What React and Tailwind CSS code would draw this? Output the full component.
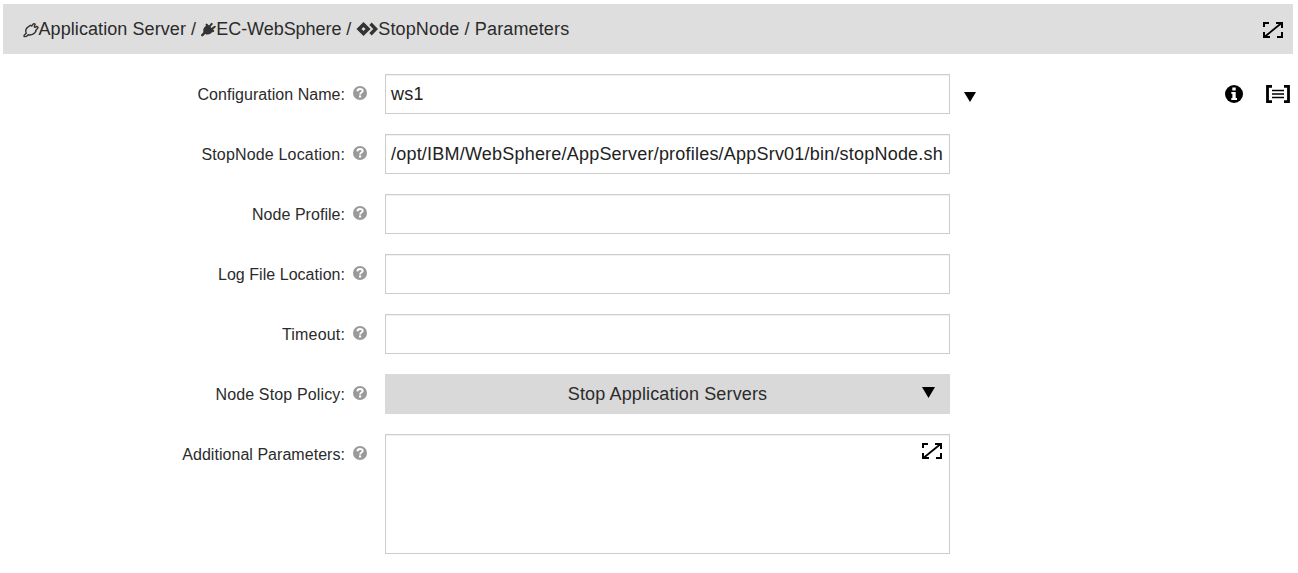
import React from "react";

function PlugIcon({ filled, className }) {
  return (
    <svg viewBox="0 0 16 16" className={className} fill="none" stroke="#333" strokeWidth="1.4" strokeLinejoin="round">
      {filled ? (
        <>
          <path d="M1.4 14.6 4.5 11.4" strokeWidth="2.6" strokeLinecap="round" />
          <path d="M3.4 12.8C1.6 10.2 2.2 7 4.4 5.2L6.6 3.2 13 9.6C11.8 12.6 8.5 14.6 5.6 13.8Z" fill="#333" stroke="none" />
          <path d="M6 3.4 13 10.2M9 5.4 11.4 2.6M11.4 8.2 14.6 5.6" strokeWidth="2.2" strokeLinecap="round" />
        </>
      ) : (
        <path d="M1.2 14.6 1 13.4 3.2 11.2C2.2 8.6 3.2 6 5.5 4.6L7.5 3.2 8.6 4 10.6 1.6 12.2 2.2 11.2 4.6 12.2 5.4 13.8 4.4 15 5.4 14.6 6.6 12.6 8.4 13 9.2C11.4 12 8.6 13.4 5.2 12.8L3.4 14.4Z" />
      )}
    </svg>
  );
}

function ProcedureIcon() {
  return (
    <svg viewBox="0 0 22 16" className="h-4 w-[22px] shrink-0" fill="none" stroke="#333">
      <path d="M7.5 3.5 12 8 7.5 12.5 3 8Z" strokeWidth="3.6" />
      <path d="M14.5 2.8 19.7 8 14.5 13.2" strokeWidth="3.4" />
    </svg>
  );
}

function ExpandIcon({ className }) {
  return (
    <svg viewBox="0 0 20 16" className={className} fill="none" stroke="#000" strokeWidth="2">
      <path d="M0 1H6M1 0V5M14 15H20M19 16V10M13 1H20M19 0V6M0 15H7M1 16V10" />
      <path d="M2 14.5 18 1.5" strokeWidth="1.8" />
    </svg>
  );
}

function HelpIcon() {
  return (
    <svg viewBox="0 0 14 14" className="mt-3 ml-2 h-3.5 w-3.5 shrink-0">
      <circle cx="7" cy="7" r="7" fill="#999" />
      <path d="M4.4 5.4C4.5 3.8 5.5 3 7 3S9.7 3.8 9.7 5C9.7 6.6 7.1 6.5 7.1 8.4" fill="none" stroke="#fff" strokeWidth="1.9" />
      <rect x="6" y="9.4" width="2.2" height="2.1" fill="#fff" />
    </svg>
  );
}

function Row({ label, tracking = "tracking-[0.04px]", children }) {
  return (
    <div className="flex">
      <label className={`h-10 w-[345px] shrink-0 text-right text-base leading-[42px] whitespace-nowrap ${tracking}`}>{label}</label>
      <HelpIcon />
      <div className="ml-[18px] flex grow">{children}</div>
    </div>
  );
}

function TextField({ value = "" }) {
  return (
    <div className="h-10 w-[565px] shrink-0 border border-[#ccc] bg-white pl-[5px] text-lg leading-[38px] tracking-[0.21px] whitespace-nowrap text-[#222] shadow-[inset_0_1px_1px_rgba(0,0,0,0.06)]">
      {value}
    </div>
  );
}

export default function App() {
  return (
    <main className="h-[573px] w-[1298px] overflow-hidden bg-white pt-1 font-['Liberation_Sans',Arial,sans-serif] text-[#2b2b2b]">
      <header className="mr-[5px] ml-[3px] flex h-[50px] items-center bg-[#dedede] pr-2.5 pl-[19.5px] text-lg whitespace-pre">
        <PlugIcon className="mt-0.5 h-4 w-4 shrink-0" />
        <span className="tracking-[0.08px]">Application Server / </span>
        <PlugIcon filled className="h-4 w-[15px] shrink-0" />
        <span className="tracking-[-0.05px]">EC-WebSphere / </span>
        <ProcedureIcon />
        <span className="tracking-[0.14px]">StopNode / Parameters</span>
        <ExpandIcon className="mt-0.5 ml-auto h-4 w-5" />
      </header>
      <form className="flex flex-col gap-5 pt-5">
        <Row label="Configuration Name:">
          <TextField value="ws1" />
          <svg viewBox="0 0 12 10" className="mt-[18px] ml-3.5 h-2.5 w-3">
            <path d="M0 0H12L6 10Z" />
          </svg>
          <div className="mt-[11px] mr-2 ml-auto flex gap-[23px]">
            <svg viewBox="0 0 18 18" className="h-[18px] w-[18px]">
              <circle cx="9" cy="9" r="9" />
              <path d="M7.3 2.6H10.7V5.4H7.3ZM6.3 7H10.7V13H12V15H6.3V13H7.4V8.7H6.3Z" fill="#fff" />
            </svg>
            <svg viewBox="0 0 24 18" className="h-[18px] w-6" fill="none" stroke="#000">
              <path d="M6 1.3H1.5V16.7H6M18 1.3H22.5V16.7H18" strokeWidth="2.8" />
              <path d="M6 5.5H18M6 9H18M6 12.5H18" strokeWidth="1.6" />
            </svg>
          </div>
        </Row>
        <Row label="StopNode Location:" tracking="tracking-[0.17px]">
          <TextField value="/opt/IBM/WebSphere/AppServer/profiles/AppSrv01/bin/stopNode.sh" />
        </Row>
        <Row label="Node Profile:">
          <TextField />
        </Row>
        <Row label="Log File Location:">
          <TextField />
        </Row>
        <Row label="Timeout:" tracking="tracking-[0.17px]">
          <TextField />
        </Row>
        <Row label="Node Stop Policy:" tracking="tracking-[0.14px]">
          <div className="flex h-10 w-[565px] bg-[#d9d9d9] pr-[15px] pl-[28px] text-lg leading-10">
            <span className="grow text-center tracking-[0.14px]">Stop Application Servers</span>
            <svg viewBox="0 0 13 11" className="mt-[13px] h-[11px] w-[13px]">
              <path d="M0 0H13L6.5 11Z" />
            </svg>
          </div>
        </Row>
        <Row label="Additional Parameters:">
          <div className="flex h-[120px] w-[565px] justify-end border border-[#ccc] pt-2 pr-[7px] shadow-[inset_0_1px_1px_rgba(0,0,0,0.06)]">
            <ExpandIcon className="h-4 w-5" />
          </div>
        </Row>
      </form>
    </main>
  );
}
